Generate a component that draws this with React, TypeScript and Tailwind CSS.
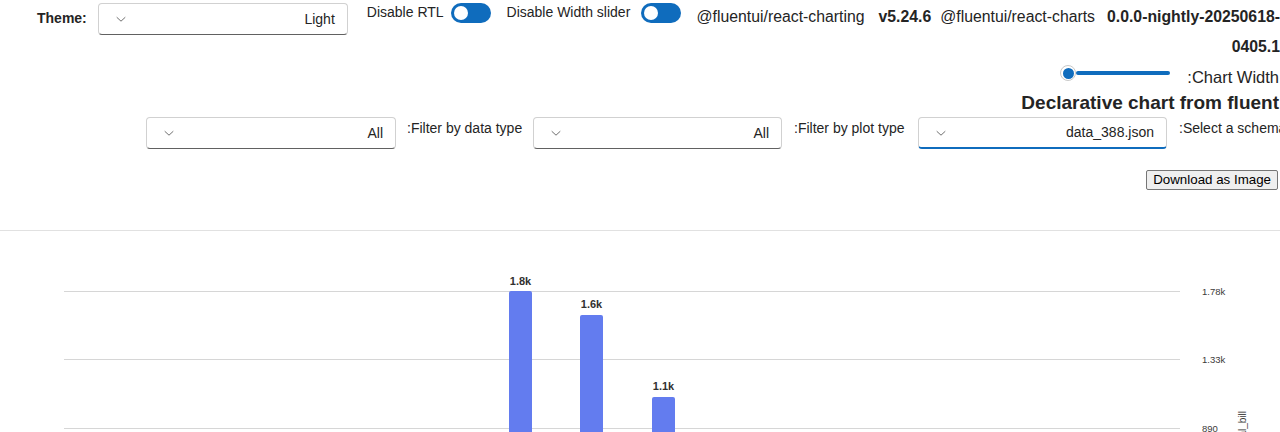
import React from "react";

const Chevron = () => (
  <svg width="12" height="12" viewBox="0 0 12 12" fill="none">
    <path d="M2 4.5 L6 8.2 L10 4.5" stroke="#707070" strokeWidth="1" strokeLinecap="round" strokeLinejoin="round" />
  </svg>
);

const Dropdown = ({ value, focused = false, w = "w-[250px]" }: { value: string; focused?: boolean; w?: string }) => (
  <div
    className={
      w +
      " h-[32px] rounded-[4px] border border-[#d1d1d1] bg-white flex items-center justify-between pl-[16px] pr-[12px] shrink-0 " +
      (focused ? "border-b-2 border-b-[#0f6cbd]" : "border-b-[#616161]")
    }
  >
    <Chevron />
    <span className="text-[14px] text-[#242424]">{value}</span>
  </div>
);

const Toggle = () => (
  <div className="w-[40px] h-[20px] rounded-full bg-[#0f6cbd] flex items-center pl-[3px] shrink-0">
    <div className="w-[14px] h-[14px] rounded-full bg-white" />
  </div>
);

export default function App() {
  return (
    <div
      className="w-[1280px] h-[432px] overflow-hidden bg-white text-[#242424]"
      style={{ fontFamily: '"Liberation Sans", Arial, sans-serif' }}
    >
      {/* Row 1 */}
      <div className="flex items-start h-[60px] pl-[37px]">
        <span className="text-[14px] font-bold mt-[8px] leading-[20px]">Theme:</span>
        <div className="ml-[11px] mt-[3px]">
          <Dropdown value="Light" />
        </div>
        <div className="flex items-center ml-[19px] mt-[3px] h-[20px]">
          <span className="text-[14px] leading-[20px] mt-[-2px]">Disable RTL</span>
          <div className="ml-[7px]">
            <Toggle />
          </div>
          <span className="text-[14px] leading-[20px] ml-[16px] mt-[-2px]">Disable Width slider</span>
          <div className="ml-[11px]">
            <Toggle />
          </div>
        </div>
        <div className="flex-1 text-right text-[15.8px] leading-[30px] pt-[2px] ml-[12px] whitespace-nowrap">
          <span>@fluentui/react-charting</span>
          <span className="font-bold ml-[14px]">v5.24.6</span>
          <span className="ml-[9px]">@fluentui/react-charts</span>
          <span className="font-bold ml-[12px]">0.0.0-nightly-20250618-</span>
          <br />
          <span className="font-bold">0405.1</span>
        </div>
      </div>

      {/* Row 2: chart width slider */}
      <div className="flex justify-end items-center h-[24px] mt-[1px] pr-[1px]">
        <div className="flex items-center w-[110px]">
          <div className="w-[16px] h-[16px] rounded-full border border-[#c8c8c8] bg-white flex items-center justify-center shrink-0">
            <div className="w-[11px] h-[11px] rounded-full bg-[#0f6cbd]" />
          </div>
          <div className="flex-1 h-[4px] rounded-full bg-[#0f6cbd]" />
        </div>
        <span className="text-[16.5px] ml-[17px] mt-[8px] leading-[20px] whitespace-nowrap">:Chart Width</span>
      </div>

      {/* Heading */}
      <div className="flex justify-end h-[28px] mt-[4px] pr-[1px]">
        <h2 className="text-[19px] font-bold leading-[28px] whitespace-nowrap">Declarative chart from fluent</h2>
      </div>

      {/* Filters */}
      <div className="flex justify-start items-start h-[32px] pl-[146px] overflow-hidden">
        <Dropdown value="All" />
        <span className="w-[114px] shrink-0 text-[14px] leading-[20px] mt-[1px] ml-[11px] whitespace-nowrap">:Filter by data type</span>
        <div className="ml-[12px]">
          <Dropdown value="All" w="w-[249px]" />
        </div>
        <span className="w-[112px] shrink-0 text-[14px] leading-[20px] mt-[1px] ml-[12px] whitespace-nowrap">:Filter by plot type</span>
        <div className="ml-[12px]">
          <Dropdown value="data_388.json" focused w="w-[249px]" />
        </div>
        <span className="shrink-0 text-[14px] leading-[20px] mt-[1px] ml-[12px] whitespace-nowrap">:Select a schema</span>
      </div>

      {/* Download */}
      <div className="flex justify-end mt-[21px] pr-[2px]">
        <button className="h-[20px] px-[6px] border border-[#767676] rounded-[2px] bg-[#efefef] text-[13.33px] leading-[16px] text-black">
          Download as Image
        </button>
      </div>

      {/* Separator */}
      <div className="mt-[40px] border-t border-[#e1e1e1]" />

      {/* Chart */}
      <svg width="1280" height="201" className="block" style={{ fontFamily: '"Liberation Sans", Arial, sans-serif' }}>
        <line x1="64" x2="1180" y1="60.5" y2="60.5" stroke="#d6d6d6" />
        <line x1="64" x2="1180" y1="128.5" y2="128.5" stroke="#d6d6d6" />
        <line x1="64" x2="1180" y1="197.5" y2="197.5" stroke="#d6d6d6" />
        <text x="1202" y="64" fontSize="9.5" fill="#3b3a39">1.78k</text>
        <text x="1202" y="132" fontSize="9.5" fill="#3b3a39">1.33k</text>
        <text x="1202" y="201" fontSize="9.5" fill="#3b3a39">890</text>
        <text
          x="1246"
          y="180"
          fontSize="10"
          fill="#3b3a39"
          textAnchor="end"
          transform="rotate(-90 1246 180)"
        >
          total_bill
        </text>

        <path d="M509 62 a2 2 0 0 1 2 -2 h19 a2 2 0 0 1 2 2 V201 H509 Z" fill="#637cef" />
        <path d="M580 86 a2 2 0 0 1 2 -2 h19 a2 2 0 0 1 2 2 V201 H580 Z" fill="#637cef" />
        <path d="M652 168 a2 2 0 0 1 2 -2 h19 a2 2 0 0 1 2 2 V201 H652 Z" fill="#637cef" />
        <text x="520.5" y="54" fontSize="11" fontWeight="600" fill="#323130" textAnchor="middle">1.8k</text>
        <text x="591.5" y="77" fontSize="11" fontWeight="600" fill="#323130" textAnchor="middle">1.6k</text>
        <text x="663.5" y="159" fontSize="11" fontWeight="600" fill="#323130" textAnchor="middle">1.1k</text>
      </svg>
    </div>
  );
}
